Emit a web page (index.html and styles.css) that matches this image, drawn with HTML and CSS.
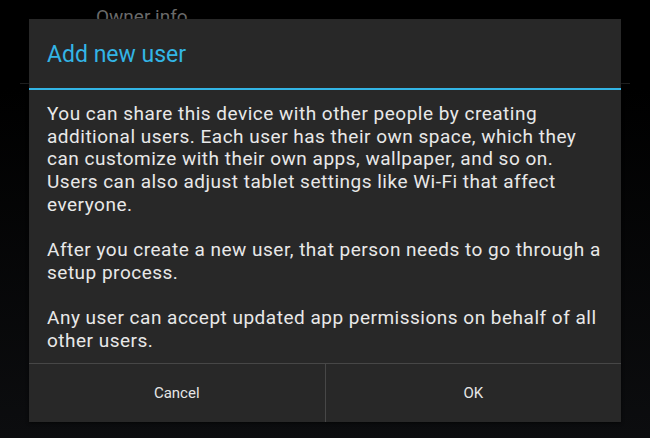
FILE: index.html
```html
<!DOCTYPE html>
<html>
<head>
<meta charset="utf-8">
<link rel="stylesheet" href="styles.css">
</head>
<body>
<div class="screen">
  <div class="settings">
    <div class="item">Owner info</div>
    <div class="list-divider"></div>
  </div>
  <div class="dialog">
    <div class="title">Add new user</div>
    <div class="title-rule"></div>
    <div class="content">
      <p>You can share this device with other people by creating additional users. Each user has their own space, which they can customize with their own apps, wallpaper, and so on. Users can also adjust tablet settings like Wi-Fi that affect everyone.</p>
      <p>After you create a new user, that person needs to go through a setup process.</p>
      <p>Any user can accept updated app permissions on behalf of all other users.</p>
    </div>
    <div class="buttons">
      <div class="btn">Cancel</div>
      <div class="btn">OK</div>
    </div>
  </div>
</div>
</body>
</html>
```
FILE: styles.css
```css
html, body {
  margin: 0;
  padding: 0;
}
body {
  width: 650px;
  height: 438px;
  overflow: hidden;
  background: linear-gradient(#000 0%, #000 20%, #0c0d0f 100%);
  font-family: Roboto, "Liberation Sans", sans-serif;
}
.screen {
  position: relative;
  width: 650px;
  height: 438px;
}
.settings {
  padding-top: 4px;
}
.item {
  padding-left: 96px;
  font-size: 19px;
  line-height: 26px;
  color: #6a6a6a;
}
.list-divider {
  margin: 53px 20px 0 20px;
  height: 1px;
  background: #1e1e1e;
}
.dialog {
  position: absolute;
  left: 29px;
  top: 19px;
  width: 592px;
  height: 403px;
  background: #282828;
  display: flex;
  flex-direction: column;
  box-shadow: 0 1px 3px rgba(0,0,0,0.6);
}
.title {
  flex-shrink: 0;
  height: 69px;
  box-sizing: border-box;
  padding-left: 18px;
  display: flex;
  align-items: center;
  font-size: 23px;
  color: #33b5e5;
  padding-top: 2px;
}
.title-rule {
  flex-shrink: 0;
  height: 2px;
  background: #33b5e5;
}
.content {
  flex: 1;
  padding: 13px 18px 0 18px;
  color: #e8e8e8;
  font-size: 19px;
  letter-spacing: 0.5px;
  line-height: 22.7px;
}
.content p {
  margin: 0 0 22.7px 0;
}
.content p:last-child {
  margin-bottom: 0;
}
.buttons {
  flex-shrink: 0;
  height: 58px;
  border-top: 1px solid #474747;
  display: flex;
}
.btn {
  flex: 1;
  display: flex;
  align-items: center;
  justify-content: center;
  color: #e6e6e6;
  font-size: 15px;
}
.btn + .btn {
  border-left: 1px solid #474747;
}
```
